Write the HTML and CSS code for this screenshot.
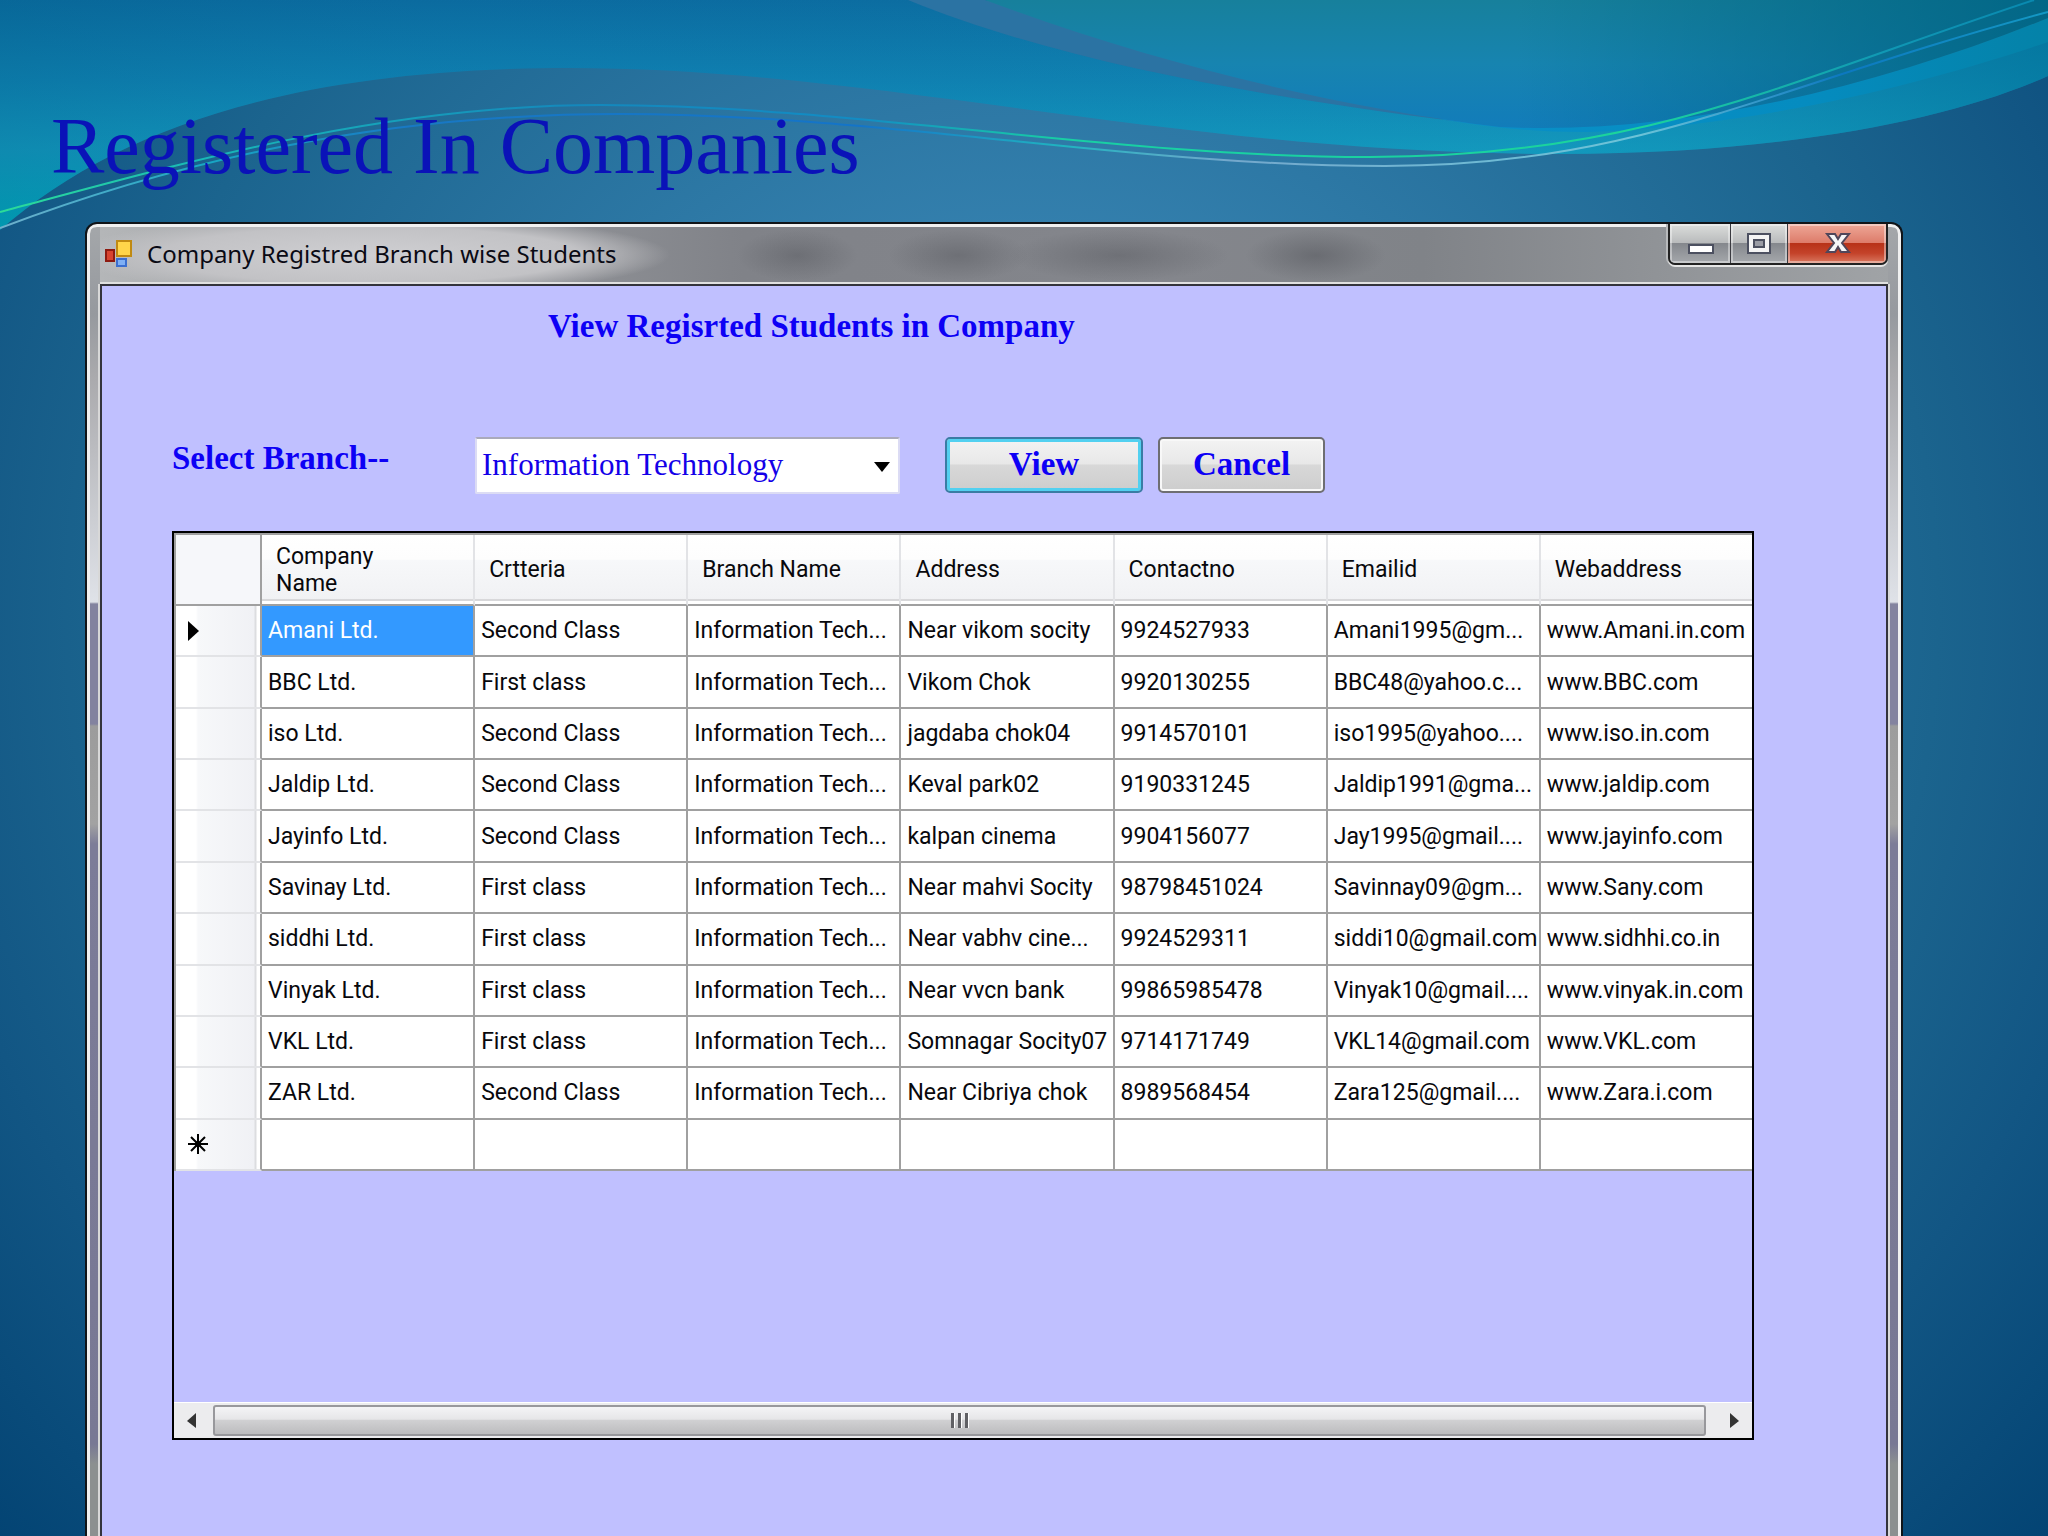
FILE: index.html
```
<!DOCTYPE html>
<html lang="en">
<head>
  <meta charset="UTF-8">
  <meta name="viewport" content="width=device-width, initial-scale=1.0">
  <title>Registered In Companies</title>
  <link rel="stylesheet" href="styles.css">
</head>
<body>

  <!-- Wave artwork behind the slide title -->
  <svg class="waves" viewBox="0 0 2048 240" preserveAspectRatio="none" aria-hidden="true">
    <defs>
      <linearGradient id="sea" x1="0" y1="0" x2="0" y2="1">
        <stop offset="0" stop-color="#0b6a9e"/>
        <stop offset="0.35" stop-color="#0f80b0"/>
        <stop offset="0.65" stop-color="#1398bd"/>
        <stop offset="1" stop-color="#00aabc"/>
      </linearGradient>
      <linearGradient id="shade" x1="0" y1="0" x2="1" y2="0">
        <stop offset="0" stop-color="#006088" stop-opacity="0.25"/>
        <stop offset="0.3" stop-color="#1079b4" stop-opacity="0.1"/>
        <stop offset="0.75" stop-color="#1498bc" stop-opacity="0.2"/>
        <stop offset="1" stop-color="#007a9c" stop-opacity="0.6"/>
      </linearGradient>
      <linearGradient id="bowl" x1="0" y1="0" x2="0" y2="1">
        <stop offset="0" stop-color="#17809c"/>
        <stop offset="0.5" stop-color="#1784b0"/>
        <stop offset="1" stop-color="#127cba"/>
      </linearGradient>
      <linearGradient id="bowlShade" x1="0" y1="0" x2="1" y2="0">
        <stop offset="0.5" stop-color="#006484" stop-opacity="0"/>
        <stop offset="1" stop-color="#006484" stop-opacity="0.9"/>
      </linearGradient>
      <linearGradient id="crest" x1="0" y1="0" x2="1" y2="0">
        <stop offset="0" stop-color="#0a90c8"/>
        <stop offset="0.6" stop-color="#058cc0"/>
        <stop offset="1" stop-color="#0482a8"/>
      </linearGradient>
      <linearGradient id="green" gradientUnits="userSpaceOnUse" x1="0" y1="0" x2="2048" y2="0">
        <stop offset="0" stop-color="#2cdc98"/>
        <stop offset="0.1" stop-color="#18b8b8"/>
        <stop offset="0.28" stop-color="#1488bc"/>
        <stop offset="0.42" stop-color="#128cc4"/>
        <stop offset="0.52" stop-color="#18cfa4"/>
        <stop offset="0.8" stop-color="#1bd49c"/>
        <stop offset="0.92" stop-color="#1098b4"/>
        <stop offset="1" stop-color="#0888b0"/>
      </linearGradient>
      <linearGradient id="pale" gradientUnits="userSpaceOnUse" x1="0" y1="0" x2="2048" y2="0">
        <stop offset="0" stop-color="#6fb0cc"/>
        <stop offset="0.1" stop-color="#18a8c4"/>
        <stop offset="0.2" stop-color="#1878c4"/>
        <stop offset="0.42" stop-color="#1474c8"/>
        <stop offset="0.52" stop-color="#20b4c0"/>
        <stop offset="0.6" stop-color="#74a8cc"/>
        <stop offset="0.8" stop-color="#6cc4d8"/>
        <stop offset="0.9" stop-color="#0c78c0"/>
        <stop offset="1" stop-color="#1498c4"/>
      </linearGradient>
    </defs>
    <path fill="url(#sea)" d="M0 0V230C120 125 300 68 570 68C880 68 1180 154 1560 154C1780 154 1950 120 2048 76V0Z"/>
    <path fill="url(#shade)" d="M0 0V230C120 125 300 68 570 68C880 68 1180 154 1560 154C1780 154 1950 120 2048 76V0Z"/>
    <path fill="#2b73a3" d="M908 0C1060 62 1260 98 1500 127L1560 124L985 0Z"/>
    <path fill="url(#crest)" d="M1440 119Q1520 133 1590 132C1760 126 1930 82 2048 42V18C1900 66 1700 120 1570 120Z"/>
    <path fill="url(#bowl)" d="M985 0C1150 62 1330 106 1500 127C1680 136 1880 86 2048 18V0Z"/>
    <path fill="url(#bowlShade)" d="M985 0C1150 62 1330 106 1500 127C1680 136 1880 86 2048 18V0Z"/>
    <path class="wave-line" stroke="url(#pale)" d="M0 228C180 160 380 114 620 114C880 114 1130 166 1385 166C1640 166 1770 86 2048 12"/>
    <path class="wave-line" stroke="url(#green)" d="M0 212C180 164 380 105 600 105C850 105 1110 157 1370 157C1640 157 1780 84 2034 0"/>
  </svg>

  <h1 class="slide-title">Registered In Companies</h1>

  <div class="window">
    <div class="titlebar">
      <svg class="app-icon" viewBox="0 0 28 28" aria-hidden="true">
        <rect x="1" y="11" width="8" height="11" fill="#d8432f" stroke="#8e1a10" stroke-width="2"/>
        <rect x="12" y="2" width="14" height="15" fill="#ffd54a" stroke="#c08a12" stroke-width="2"/>
        <rect x="12" y="20" width="9" height="7" fill="#7fb0f5" stroke="#3b6fd0" stroke-width="2"/>
      </svg>
      <span class="window-name">Company Registred Branch wise Students</span>
      <div class="controls">
        <button class="ctl minimize" aria-label="Minimize">
          <svg width="60" height="39" viewBox="0 0 60 39"><rect x="19" y="21" width="24" height="8" fill="#fff" stroke="#4c5060" stroke-width="2"/></svg>
        </button>
        <button class="ctl maximize" aria-label="Maximize">
          <svg width="56" height="39" viewBox="0 0 56 39"><rect x="17" y="10" width="22" height="19" fill="#f4f4f4" stroke="#4c5060" stroke-width="2"/><rect x="23" y="16" width="10" height="7" fill="#9a9ca4" stroke="#4c5060" stroke-width="2"/></svg>
        </button>
        <button class="ctl close" aria-label="Close">
          <svg width="98" height="39" viewBox="0 0 98 39"><path d="M39 10h8l3 5 3-5h8l-7 9 7 9h-8l-3-5-3 5h-8l7-9z" fill="#f6f6f8" stroke="#50465a" stroke-width="2"/></svg>
        </button>
      </div>
    </div>

    <div class="client">
      <h2>View Regisrted Students in Company</h2>

      <div class="form-row">
        <label for="branch">Select Branch--</label>
        <div class="combo">
          <select id="branch">
            <option>Information Technology</option>
          </select>
          <svg class="combo-arrow" width="16" height="10" viewBox="0 0 16 10" aria-hidden="true"><path d="M0 0h16L8 10z"/></svg>
        </div>
        <button class="btn btn-view">View</button>
        <button class="btn btn-cancel">Cancel</button>
      </div>

      <div class="grid">
        <table>
          <colgroup>
            <col class="col-head">
            <col><col><col><col><col><col><col>
          </colgroup>
          <thead>
            <tr>
              <td class="corner"></td>
              <th>Company<br>Name</th>
              <th>Crtteria</th>
              <th>Branch Name</th>
              <th>Address</th>
              <th>Contactno</th>
              <th>Emailid</th>
              <th>Webaddress</th>
            </tr>
          </thead>
          <tbody>
            <tr><td class="row-head"><svg width="12" height="20" viewBox="0 0 12 20"><path d="M0 0l11 10L0 20z"/></svg></td><td class="selected">Amani Ltd.</td><td>Second Class</td><td>Information Tech...</td><td>Near vikom socity</td><td>9924527933</td><td>Amani1995@gm...</td><td>www.Amani.in.com</td></tr>
            <tr><td class="row-head"></td><td>BBC Ltd.</td><td>First class</td><td>Information Tech...</td><td>Vikom Chok</td><td>9920130255</td><td>BBC48@yahoo.c...</td><td>www.BBC.com</td></tr>
            <tr><td class="row-head"></td><td>iso Ltd.</td><td>Second Class</td><td>Information Tech...</td><td>jagdaba chok04</td><td>9914570101</td><td>iso1995@yahoo....</td><td>www.iso.in.com</td></tr>
            <tr><td class="row-head"></td><td>Jaldip Ltd.</td><td>Second Class</td><td>Information Tech...</td><td>Keval park02</td><td>9190331245</td><td>Jaldip1991@gma...</td><td>www.jaldip.com</td></tr>
            <tr><td class="row-head"></td><td>Jayinfo Ltd.</td><td>Second Class</td><td>Information Tech...</td><td>kalpan cinema</td><td>9904156077</td><td>Jay1995@gmail....</td><td>www.jayinfo.com</td></tr>
            <tr><td class="row-head"></td><td>Savinay Ltd.</td><td>First class</td><td>Information Tech...</td><td>Near mahvi Socity</td><td>98798451024</td><td>Savinnay09@gm...</td><td>www.Sany.com</td></tr>
            <tr><td class="row-head"></td><td>siddhi Ltd.</td><td>First class</td><td>Information Tech...</td><td>Near vabhv cine...</td><td>9924529311</td><td>siddi10@gmail.com</td><td>www.sidhhi.co.in</td></tr>
            <tr><td class="row-head"></td><td>Vinyak Ltd.</td><td>First class</td><td>Information Tech...</td><td>Near vvcn bank</td><td>99865985478</td><td>Vinyak10@gmail....</td><td>www.vinyak.in.com</td></tr>
            <tr><td class="row-head"></td><td>VKL Ltd.</td><td>First class</td><td>Information Tech...</td><td>Somnagar Socity07</td><td>9714171749</td><td>VKL14@gmail.com</td><td>www.VKL.com</td></tr>
            <tr><td class="row-head"></td><td>ZAR Ltd.</td><td>Second Class</td><td>Information Tech...</td><td>Near Cibriya chok</td><td>8989568454</td><td>Zara125@gmail....</td><td>www.Zara.i.com</td></tr>
            <tr><td class="row-head"><svg width="20" height="20" viewBox="0 0 20 20"><path d="M10 0v20M0 10h20M3 3l14 14M17 3L3 17" stroke="#000" stroke-width="2"/><circle cx="10" cy="10" r="3"/></svg></td><td></td><td></td><td></td><td></td><td></td><td></td><td></td></tr>
          </tbody>
        </table>

        <div class="scrollbar">
          <button class="scroll-btn" aria-label="Scroll left"><svg width="9" height="15" viewBox="0 0 9 15"><path d="M9 0v15L0 8z" fill="#333"/></svg></button>
          <div class="thumb"><i></i><i></i><i></i></div>
          <button class="scroll-btn" aria-label="Scroll right"><svg width="9" height="15" viewBox="0 0 9 15"><path d="M0 0v15l9-7z" fill="#333"/></svg></button>
        </div>
      </div>
    </div>
  </div>

</body>
</html>
```
FILE: styles.css
```
* {
  box-sizing: border-box;
}
body {
  margin: 0;
  min-height: 100vh;
  display: flex;
  flex-direction: column;
  position: relative;
  font-family: Roboto, "Liberation Sans", sans-serif;
  background: radial-gradient(ellipse 62% 80% at 50% 40%, #3b8cb8 0%, #3480ae 30%, #1b648e 72%, #125684 88%, #004070 115%);
}
.waves {
  position: absolute;
  top: 0;
  left: 0;
  width: 100%;
  height: 240px;
  z-index: -1;
}
.wave-line {
  fill: none;
  stroke-width: 2;
}
.slide-title {
  margin: 0;
  padding: 98px 51px 28px;
  font-family: "Liberation Serif", serif;
  font-size: 80px;
  line-height: 96px;
  font-weight: normal;
  color: #0a12b8;
}

/* Window frame */
.window {
  flex: 1;
  display: flex;
  flex-direction: column;
  margin: 0 145px 0 85px;
  padding: 0 13px;
  border: 2px solid #101418;
  border-bottom: none;
  border-radius: 12px 12px 0 0;
  background: linear-gradient(to bottom, #a4a7aa 0, #96999e 90px, #a9a9ac 150px, #dfe2e8 378px, #83839f 380px, #83839f 500px, #9c9c9c 502px, #a2a2a2 600px, #7c7c98 620px, #787894 1220px, #8c9090 1240px);
  box-shadow: inset 0 3px 0 #f0f0f0, inset 3px 0 0 #f0f0f0, inset -3px 0 0 #f0f0f0;
}
.titlebar {
  display: flex;
  align-items: flex-start;
  height: 57px;
  margin-top: 3px;
  background:
    radial-gradient(ellipse 300px 40px at 270px 28px, #cfcfd2 0%, #c2c2c5 70%, transparent 100%),
    radial-gradient(ellipse 60px 26px at 39% 50%, rgba(90, 92, 98, 0.5), transparent),
    radial-gradient(ellipse 70px 26px at 48% 50%, rgba(90, 92, 98, 0.5), transparent),
    radial-gradient(ellipse 110px 26px at 57% 50%, rgba(90, 92, 98, 0.5), transparent),
    radial-gradient(ellipse 70px 26px at 68% 50%, rgba(90, 92, 98, 0.6), transparent),
    linear-gradient(to right, #b4b6b8 0, #808288 36%, #84868c 60%, #808388 74%, #a0a3a6 100%);
}
.app-icon {
  width: 28px;
  height: 28px;
  margin: 12px 14px 0 5px;
}
.window-name {
  font-family: "Noto Sans", sans-serif;
  font-size: 24px;
  line-height: 54px;
  color: #0a0a14;
  white-space: nowrap;
}
.controls {
  display: flex;
  margin: -3px 0 0 auto;
  border: 2px solid #222;
  border-top: none;
  border-radius: 0 0 7px 7px;
  box-shadow: 0 2px 0 #e6e6e6, -2px 0 0 #b8babc;
  overflow: hidden;
}
.ctl {
  padding: 0;
  border: none;
  background: linear-gradient(to bottom, #dcdedc 0%, #b9bbbc 48%, #85888d 50%, #a5a8ac 100%);
  box-shadow: inset 0 0 0 2px rgba(255, 255, 255, 0.4);
}
.ctl + .ctl {
  border-left: 1px solid #3a3a40;
}
.ctl svg {
  display: block;
}
.close {
  background: linear-gradient(to bottom, #eea898 0%, #dd7c6a 48%, #b83218 50%, #c4432a 75%, #d97860 100%);
}

/* Form area */
.client {
  flex: 1;
  padding: 20px 132px 96px 70px;
  background: #c0c0ff;
  border: 2px solid #34343c;
  border-bottom: none;
  box-shadow: 0 -2px 0 #e0e0e0, -2px 0 0 #d8d8d8, 2px 0 0 #d8d8d8;
  font-family: "Liberation Serif", serif;
  color: #0d00f5;
}
.client h2 {
  margin: 0 0 91px;
  padding-left: 376px;
  font-size: 33px;
  line-height: 40px;
}
.form-row {
  display: flex;
  align-items: flex-start;
  margin-bottom: 37px;
}
.form-row label {
  width: 303px;
  font-size: 33px;
  line-height: 42px;
  font-weight: bold;
}
.combo {
  position: relative;
  width: 425px;
  margin-right: 45px;
}
.combo select {
  appearance: none;
  display: block;
  width: 100%;
  height: 57px;
  padding: 0 40px 2px 5px;
  border: 2px solid #dcdcf4;
  border-top-color: #aaaabb;
  border-radius: 2px;
  background: #fff;
  font-family: inherit;
  font-size: 31px;
  color: #1400e8;
}
.combo-arrow {
  position: absolute;
  right: 10px;
  top: 25px;
  pointer-events: none;
}
.btn {
  height: 56px;
  padding: 0 0 2px;
  border: 2px solid #6e6e72;
  border-radius: 5px;
  background: linear-gradient(to bottom, #f3f3f3 0%, #e8e8e8 48%, #d8d8d8 50%, #cdcdcd 100%);
  box-shadow: inset 0 0 0 2px #f8f8f8;
  font-family: inherit;
  font-size: 33px;
  font-weight: bold;
  color: #0d00f5;
}
.btn-view {
  width: 198px;
  margin-right: 15px;
  border-color: #3a7ca4;
  box-shadow: inset 0 0 0 3px #52d0f0;
}
.btn-cancel {
  width: 167px;
}

/* Data grid */
.grid {
  display: flex;
  flex-direction: column;
  min-height: 909px;
  border: 2px solid #000;
  overflow: hidden;
  font-family: Roboto, "Liberation Sans", sans-serif;
  font-size: 23px;
  color: #08080c;
}
table {
  width: calc(100% + 2px);
  height: 638px;
  table-layout: fixed;
  border-collapse: separate;
  border-spacing: 0;
  border-top: 2px solid #a0a0a0;
  border-left: 2px solid #a0a0a0;
  background: #fff;
}
.col-head {
  width: 86px;
}
th {
  height: 71px;
  padding: 0 14px;
  text-align: left;
  font-weight: normal;
  line-height: 27px;
  border-right: 2px solid #e2e3e6;
  border-bottom: 2px solid #a0a0a0;
  background: linear-gradient(to bottom, #fff 0%, #fdfdfd 35%, #f7f8fa 37%, #f1f2f4 92%, #d8d8da 93%, #d8d8da 95%, #fff 96%);
}
td {
  height: 51px;
  padding: 0 6px;
  line-height: 27px;
  white-space: nowrap;
  border-right: 2px solid #a0a0a0;
  border-bottom: 2px solid #a0a0a0;
}
th:last-child,
td:last-child {
  border-right: none;
}
.corner {
  background: #f6f7fa;
}
.row-head {
  padding: 0 12px;
  border-bottom-color: #e2e3e6;
  background: linear-gradient(to right, #fff 0, #fff 20px, #f7f8fa 22px, #f0f1f5 78px, #dcdde0 79px, #dcdde0 80px, #fff 81px);
}
.row-head svg {
  display: block;
}
.selected {
  background: #3399ff;
  color: #fff;
}
.scrollbar {
  display: flex;
  height: 36px;
  margin-top: auto;
  padding: 2px 0;
  border-top: 1px solid #fff;
  background: #ececee;
}
.scroll-btn {
  display: flex;
  align-items: center;
  justify-content: center;
  width: 39px;
  padding: 0 4px 0 0;
  border: none;
  background: none;
}
.scroll-btn:last-child {
  width: 46px;
  padding: 0 0 0 10px;
}
.thumb {
  flex: 1;
  display: flex;
  align-items: center;
  justify-content: center;
  gap: 3px;
  border: 2px solid #98989c;
  border-radius: 3px;
  background: linear-gradient(to bottom, #f4f4f6 0%, #e6e6e8 45%, #d0d0d2 50%, #bcbcbe 100%);
}
.thumb i {
  width: 4px;
  height: 15px;
  background: #606064;
  border-right: 1px solid #fff;
}
```
